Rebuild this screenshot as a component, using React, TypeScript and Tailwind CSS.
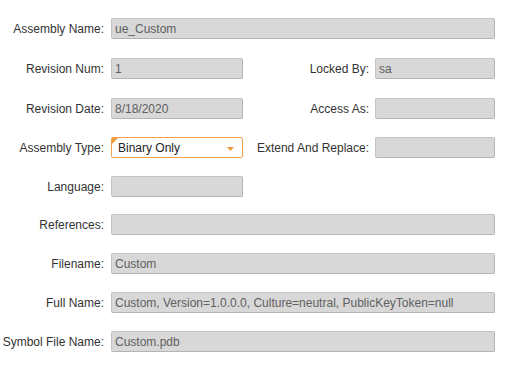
const font = "font-['Liberation_Sans',Arial,sans-serif]";

function Label({ text, width }: { text: string; width: string }) {
  return (
    <span className={`${width} shrink-0 text-right text-[12px] text-[#333]`}>
      {text}
    </span>
  );
}

function Field({ value = "", width }: { value?: string; width: string }) {
  return (
    <div
      className={`${width} flex h-[21px] shrink-0 items-center overflow-hidden whitespace-nowrap rounded-[2px] border border-[#c4c4c4] border-r-[#b4b4b4] border-b-[#b4b4b4] bg-[#d8d8d8] px-[3px] text-[12px] text-[#606060]`}
    >
      {value}
    </div>
  );
}

function FullRow({
  label,
  value,
  className = "",
}: {
  label: string;
  value?: string;
  className?: string;
}) {
  return (
    <div className={`flex items-center gap-[7px] ${className}`}>
      <Label text={label} width="w-[104px]" />
      <Field value={value} width="w-[384px]" />
    </div>
  );
}

function PairRow({
  label,
  value,
  rightLabel,
  rightValue,
  className = "",
}: {
  label: string;
  value?: string;
  rightLabel?: string;
  rightValue?: string;
  className?: string;
}) {
  return (
    <div className={`flex items-center ${className}`}>
      <Label text={label} width="w-[104px]" />
      <div className="ml-[7px]">
        <Field value={value} width="w-[132px]" />
      </div>
      {rightLabel !== undefined && (
        <>
          <Label text={rightLabel} width="w-[126px]" />
          <div className="ml-[6px]">
            <Field value={rightValue} width="w-[120px]" />
          </div>
        </>
      )}
    </div>
  );
}

function TypeSelect() {
  return (
    <div className="relative ml-[7px] flex h-[21px] w-[132px] shrink-0 items-center rounded-[2px] border border-[#f5a04c] bg-white pl-[6px] text-[12px] text-[#222]">
      <span className="absolute left-0 top-0 h-0 w-0 border-r-[6px] border-t-[6px] border-r-transparent border-t-[#f39a3c]" />
      Binary Only
      <svg
        className="absolute right-[8px] top-[9px]"
        width="7"
        height="4"
        viewBox="0 0 7 4"
      >
        <path d="M0 0h7L3.5 4z" fill="#f39a3c" />
      </svg>
    </div>
  );
}

export default function App() {
  return (
    <div className={`${font} h-[377px] w-[507px] bg-white pt-[18px]`}>
      <div className="flex flex-col gap-[18px]">
        <FullRow label="Assembly Name:" value="ue_Custom" />
        <PairRow
          className="mt-[1px]"
          label="Revision Num:"
          value="1"
          rightLabel="Locked By:"
          rightValue="sa"
        />
        <PairRow
          className="mt-[1px]"
          label="Revision Date:"
          value="8/18/2020"
          rightLabel="Access As:"
        />
        <div className="flex items-center">
          <Label text="Assembly Type:" width="w-[104px]" />
          <TypeSelect />
          <Label text="Extend And Replace:" width="w-[126px]" />
          <div className="ml-[6px]">
            <Field width="w-[120px]" />
          </div>
        </div>
        <PairRow label="Language:" />
        <FullRow className="-mt-[1px]" label="References:" />
        <FullRow label="Filename:" value="Custom" />
        <FullRow
          label="Full Name:"
          value="Custom, Version=1.0.0.0, Culture=neutral, PublicKeyToken=null"
        />
        <FullRow label="Symbol File Name:" value="Custom.pdb" />
      </div>
    </div>
  );
}
